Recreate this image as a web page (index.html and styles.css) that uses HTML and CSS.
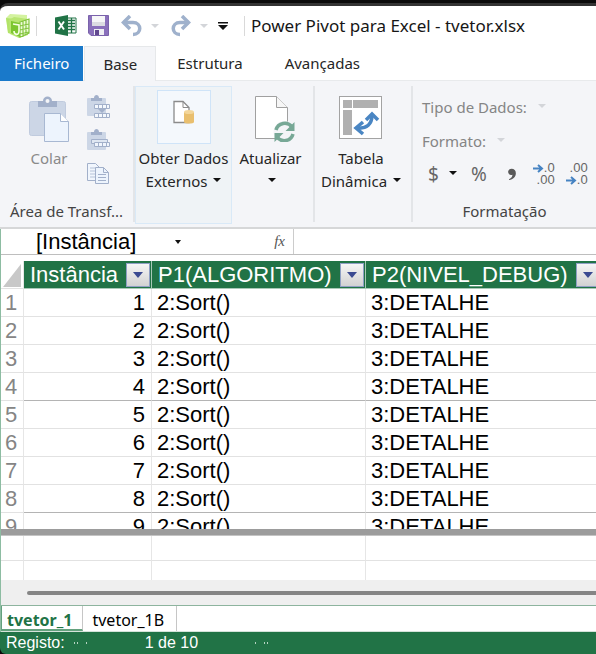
FILE: index.html
```html
<!DOCTYPE html>
<html lang="pt">
<head>
<meta charset="utf-8">
<title>Power Pivot para Excel - tvetor.xlsx</title>
<link rel="stylesheet" href="styles.css">
</head>
<body>
<div class="window">
  <header class="titlebar">
    <svg class="app-icon" width="24" height="24" viewBox="0 0 24 24" aria-hidden="true">
      <path d="M0 4 4 0l17 1v17l-5 3L2 19Z" fill="#d3f29f"/>
      <path d="M0 4l2 15 7 2V5Z" fill="#b2e368"/>
      <path d="M3 6 8 3l14 2v16l-9 3-9-4Z" fill="#b9e673"/>
      <path d="M5 7l9 2v14l-9-4Z" fill="#7cc62f"/>
      <path d="M14 8l9-3v14l-9 4Z" fill="#eefbd8"/>
      <path d="M14 12l9-2M14 16l9-2M14 20l9-2M14 8l9-3v14l-9 4ZM17 7v16M20 6v15" fill="none" stroke="#84c540" stroke-width="1.2"/>
      <path d="M7 10l6 1v6c0 5-5 4-5 0" fill="none" stroke="#f4ffe0" stroke-width="1.6"/>
    </svg>
    <span class="divider"></span>
    <button class="tool excel" aria-label="Mudar para o livro">
      <svg width="22" height="22" viewBox="0 0 22 22"><path d="M12 3h9v15h-9" fill="#fff" stroke="#207346"/><path d="M13 5.500h7M13 8.500h7M13 11.500h7M13 14.500h7M16.500 3v15" stroke="#207346" stroke-width="1.300"/><path d="M0 2.500 13 0v21L0 18.500Z" fill="#207346"/><path d="M3.500 6.500 9 14.500M9 6.500 3.500 14.500" stroke="#fff" stroke-width="1.900"/></svg>
    </button>
    <button class="tool save" aria-label="Guardar">
      <svg width="22" height="22" viewBox="0 0 22 22"><path d="M.5.5h20v20H3l-2.500-2.500Z" fill="#8a70bb" stroke="#7a62ab"/><path d="M4 1h13v10H4Z" fill="#f6f6f8"/><path d="M4 7h13v4H4Z" fill="#dcdce2"/><path d="M6 14h10v6H6Z" fill="#efeff4"/><path d="M7 15h4v5H7Z" fill="#62498f"/></svg>
    </button>
    <button class="tool undo" aria-label="Anular">
      <svg width="22" height="22" viewBox="0 0 22 22"><path d="M2 7.500h10c9 0 9 12 0 12" fill="none" stroke="#9fb1cc" stroke-width="3.500"/><path d="M9 1 2.500 7.500 9 14" fill="none" stroke="#9fb1cc" stroke-width="3.500"/></svg>
    </button>
    <button class="tool" aria-label="Opções de anular"><span class="caret pale"></span></button>
    <button class="tool redo" aria-label="Refazer">
      <svg width="22" height="22" viewBox="0 0 22 22"><path d="M19 7.500H10c-9 0-9 12 0 12" fill="none" stroke="#9fb1cc" stroke-width="3.500"/><path d="m12 1 6.500 6.500L12 14" fill="none" stroke="#9fb1cc" stroke-width="3.500"/></svg>
    </button>
    <button class="tool" aria-label="Opções de refazer"><span class="caret pale"></span></button>
    <button class="tool customize" aria-label="Personalizar barra">
      <svg width="10" height="8" viewBox="0 0 10 8"><path d="M0 0h10v1.500H0ZM0 3h10L5 8Z" fill="#111"/></svg>
    </button>
    <span class="divider last"></span>
    <h1>Power Pivot para Excel - tvetor.xlsx</h1>
  </header>

  <nav class="tabs">
    <button class="tab file">Ficheiro</button>
    <button class="tab active">Base</button>
    <button class="tab">Estrutura</button>
    <button class="tab">Avançadas</button>
  </nav>

  <section class="ribbon">
    <div class="group clipboard">
      <div class="controls">
        <button class="big paste" disabled>
          <span class="icon"><svg width="40" height="46" viewBox="0 0 40 46"><rect x=".5" y="5.500" width="36" height="34" rx="2" fill="#ccd6e6" stroke="#c0cbde"/><path d="M9 11V5h5c0-6 9-6 9 0h5v6Z" fill="#a2b0ca"/><circle cx="18.500" cy="5" r="2" fill="#f4f5f8"/><path d="M15.500 17.500h16l8 8v20h-24Z" fill="#edf4fd" stroke="#a8b8d2"/><path d="M31.500 17.500v8h8" fill="#fff" stroke="#a8b8d2"/></svg></span>
          <span class="label">Colar</span>
        </button>
        <div class="stack">
          <button aria-label="Colar e acrescentar" disabled><svg width="23" height="24" viewBox="0 0 23 24"><rect y="3" width="19" height="18" rx="1" fill="#ccd6e6"/><path d="M4 6V3h3c0-4 5-4 5 0h3v3Z" fill="#a2b0ca"/><path d="M7.500 9.500h15v4h-15ZM7.500 18.500h15v4h-15Z" fill="#f4f8fd" stroke="#a2b0ca"/><path d="M11.500 10v3M15.500 10v3M19.500 10v3M11.500 19v3M15.500 19v3M19.500 19v3" stroke="#a2b0ca"/><path d="M11 14h8l-4 4Z" fill="#a2b0ca"/></svg></button>
          <button aria-label="Colar e substituir" disabled><svg width="23" height="24" viewBox="0 0 23 24"><rect y="4" width="19" height="18" rx="1" fill="#ccd6e6"/><path d="M4 7V4h3c0-4 5-4 5 0h3v3Z" fill="#a2b0ca"/><path d="M4.500 11.500h16v4h-16Z" fill="#dfe7f2" stroke="#a2b0ca"/><path d="M7.500 14.500h15v4h-15Z" fill="#f0f5fc" stroke="#a2b0ca"/><path d="M11.500 15v3M15.500 15v3M19.500 15v3" stroke="#a2b0ca"/></svg></button>
          <button aria-label="Copiar" disabled><svg width="23" height="24" viewBox="0 0 23 24"><path d="M.5 2.500h8l4 4v13H.5Z" fill="#f1f6fd" stroke="#a2b0ca"/><path d="M3 7h6M3 10h6M3 13h6M3 16h6" stroke="#b6c3d8"/><path d="M8.500 6.500h8l5 5v11h-13Z" fill="#edf4fd" stroke="#a2b0ca"/><path d="M16.500 6.500v5h5M11 13.500h8M11 16.500h8M11 19.500h8" fill="none" stroke="#a2b0ca"/></svg></button>
        </div>
      </div>
      <p class="group-name">Área de Transf...</p>
    </div>

    <div class="group data">
      <button class="big hover">
        <span class="icon frame"><svg width="22" height="24" viewBox="0 0 22 24"><path d="M1 1.500h9l6 6v15H1Z" fill="#fff" stroke="#8b8b8b" stroke-width="1.300"/><path d="M10 1.500v6h6" fill="none" stroke="#8b8b8b"/><path d="M11 12v10c0 2 10 2 10 0V12Z" fill="#e9bf6e"/><ellipse cx="16" cy="12" rx="5" ry="2" fill="#f3d69a"/></svg></span>
        <span class="label">Obter Dados<br>Externos <span class="caret"></span></span>
      </button>
      <button class="big refresh">
        <span class="icon"><svg width="40" height="46" viewBox="0 0 40 46"><path d="M.5.500h21l11 11v31H.5Z" fill="#fff" stroke="#a0a0a0"/><path d="M21.500.500v11h11" fill="#f6f6f6" stroke="#a0a0a0"/><circle cx="29.500" cy="36" r="11" fill="#f4f5f8"/><path d="M21 34a9 9 0 0 1 16-3M38 38a9 9 0 0 1-16 3" fill="none" stroke="#77a896" stroke-width="3.500"/><path d="M39.500 26v9h-9ZM19.500 46v-9h9Z" fill="#77a896"/></svg></span>
        <span class="label">Atualizar<br><span class="caret"></span></span>
      </button>
    </div>

    <div class="group pivot">
      <button class="big">
        <span class="icon"><svg width="43" height="44" viewBox="0 0 43 44"><rect x=".5" y=".5" width="42" height="42" fill="#fff" stroke="#a3a3a3"/><path d="M4 4h9v8H4ZM14 4h25v8H14ZM4 14h9v25H4Z" fill="#b0b0b0"/><path d="M18 32c10 1 15-4 15-13" fill="none" stroke="#4a86c3" stroke-width="3.500"/><path d="m27 24 6-6 6 6M24 26l-7 6 7 6" fill="none" stroke="#4a86c3" stroke-width="3.500"/></svg></span>
        <span class="label">Tabela<br>Dinâmica <span class="caret"></span></span>
      </button>
    </div>

    <div class="group format">
      <div class="format-rows">
        <button class="drop" disabled>Tipo de Dados: <span class="caret pale"></span></button>
        <button class="drop" disabled>Formato: <span class="caret pale"></span></button>
        <div class="numbers">
          <button class="dollar">$</button>
          <button aria-label="Moedas"><span class="caret"></span></button>
          <button class="percent">%</button>
          <button class="comma" aria-label="Separador de milhares"><svg width="8" height="12" viewBox="0 0 9 14"><path d="M1 13c3-1 4-3 4-5C2 9 0 7 0 4.500 0 2 2 1 4 1c3 0 5 2 5 5 0 4-3 7-8 8Z" fill="#5a5a5a"/></svg></button>
          <button class="decimal" aria-label="Aumentar casas decimais"><span><svg width="11" height="9" viewBox="0 0 11 9"><path d="M0 4.500h9M5 1l4 3.500L5 8" fill="none" stroke="#4683c2" stroke-width="2"/></svg>.0</span><span>.00</span></button>
          <button class="decimal" aria-label="Diminuir casas decimais"><span>.00</span><span><svg width="11" height="9" viewBox="0 0 11 9"><path d="M0 4.500h9M5 1l4 3.500L5 8" fill="none" stroke="#4683c2" stroke-width="2"/></svg>.0</span></button>
        </div>
      </div>
      <p class="group-name">Formatação</p>
    </div>
  </section>

  <main class="sheet">
    <div class="formula-bar">
      <input class="name-box" aria-label="Caixa de nome" value="[Instância]">
      <button class="name-drop" aria-label="Escolher coluna"><span class="caret small"></span></button>
      <span class="fx">fx</span>
      <input class="formula" aria-label="Fórmula">
    </div>

    <div class="grid-pane">
      <table class="grid">
        <colgroup><col class="c-num"><col class="c-id"><col class="c-p1"><col class="c-p2"></colgroup>
        <thead>
          <tr>
            <td class="corner"><svg width="18" height="23" viewBox="0 0 18 23" aria-hidden="true"><path d="M18 0v23H0Z" fill="#c8c8c8"/></svg></td>
            <th><div class="head">Instância<button class="filter" aria-label="Filtrar Instância"></button></div></th>
            <th><div class="head">P1(ALGORITMO)<button class="filter" aria-label="Filtrar P1"></button></div></th>
            <th><div class="head">P2(NIVEL_DEBUG)<button class="filter" aria-label="Filtrar P2"></button></div></th>
          </tr>
        </thead>
        <tbody>
          <tr><th>1</th><td>1</td><td>2:Sort()</td><td>3:DETALHE</td></tr>
          <tr><th>2</th><td>2</td><td>2:Sort()</td><td>3:DETALHE</td></tr>
          <tr><th>3</th><td>3</td><td>2:Sort()</td><td>3:DETALHE</td></tr>
          <tr><th>4</th><td>4</td><td>2:Sort()</td><td>3:DETALHE</td></tr>
          <tr><th>5</th><td>5</td><td>2:Sort()</td><td>3:DETALHE</td></tr>
          <tr><th>6</th><td>6</td><td>2:Sort()</td><td>3:DETALHE</td></tr>
          <tr><th>7</th><td>7</td><td>2:Sort()</td><td>3:DETALHE</td></tr>
          <tr><th>8</th><td>8</td><td>2:Sort()</td><td>3:DETALHE</td></tr>
          <tr><th>9</th><td>9</td><td>2:Sort()</td><td>3:DETALHE</td></tr>
        </tbody>
      </table>
    </div>
    <div class="splitter"></div>
    <table class="grid measures">
      <colgroup><col class="c-num"><col class="c-id"><col class="c-p1"><col class="c-p2"></colgroup>
      <tbody>
        <tr><td></td><td></td><td></td><td></td></tr>
        <tr><td></td><td></td><td></td><td></td></tr>
      </tbody>
    </table>
    <div class="scroll"><div class="thumb"></div></div>
    <div class="sheet-tabs">
      <button class="sheet-tab current">tvetor_1</button>
      <button class="sheet-tab">tvetor_1B</button>
    </div>
  </main>

  <footer class="status">
    <span>Registo:</span>
    <svg width="14" height="4" viewBox="0 0 14 4" aria-hidden="true"><path d="M0 1h1v2H0ZM3 1h1v2H3ZM12 1h1v2h-1Z" fill="#b5d3c1"/></svg>
    <span class="record">1 de 10</span>
    <svg width="14" height="4" viewBox="0 0 14 4" aria-hidden="true"><path d="M0 1h1v2H0ZM9 1h1v2H9ZM12 1h1v2h-1Z" fill="#b5d3c1"/></svg>
  </footer>
</div>
</body>
</html>
```
FILE: styles.css
```css
* { box-sizing: border-box; }

body {
  margin: 0;
  background: #0a0a0a;
  color: #262626;
  font: 15px/23px "Noto Sans", "Open Sans", sans-serif;
}

button, input {
  margin: 0;
  padding: 0;
  border: 0;
  background: none;
  color: inherit;
  font: inherit;
}

h1, p { margin: 0; }
svg { display: block; flex: none; }

.window {
  display: flex;
  flex-direction: column;
  height: 100vh;
  padding-top: 3px;
  overflow: hidden;
}

.caret {
  display: inline-block;
  margin: 0 0 5px 2px;
  border: 4px solid transparent;
  border-top-color: #111;
  border-bottom: 0;
  vertical-align: middle;
}
.caret.pale { border-top-color: #d3d5d9; }
.caret.small { border-width: 4px 3px 0; }

/* Title bar */
.titlebar {
  display: flex;
  flex: none;
  align-items: center;
  height: 43px;
  padding: 0 6px;
  border-top: 3px solid #333;
  border-top-left-radius: 8px;
  background: #fff;
  white-space: nowrap;
}
.titlebar h1 { padding-bottom: 2px; color: #161616; font-size: 17px; font-weight: 400; }
.divider { width: 1px; height: 20px; margin: 0 18px 0 6px; background: #d9d9d9; }
.divider.last { margin: 0 6px 0 16px; }
.tool { flex: none; }
.save { margin-left: 11px; }
.undo, .redo { margin-left: 11px; }
.tool .caret { display: block; margin: 0 0 0 8px; }
.customize { margin-left: 10px; }

/* Ribbon tabs */
.tabs {
  display: flex;
  flex: none;
  height: 35px;
  background: #fff;
  box-shadow: inset 0 -1px #e8eaec;
}
.tab { padding: 0 20px; border: 1px solid transparent; }
.tab.file { margin-right: 1px; padding: 0 13px; background: #1979ca; color: #fff; }
.tab.active { padding: 0 18px; border-color: #e6e8ea; border-bottom: 0; background: #f4f5f8; }

/* Ribbon */
.ribbon {
  display: flex;
  flex: none;
  height: 148px;
  padding-top: 5px;
  border-bottom: 2px solid #d6d7d8;
  background: #f4f5f8;
}
.group {
  display: flex;
  flex: none;
  height: 136px;
  border-right: 2px solid #e3e5e8;
}
.clipboard, .format { flex-direction: column; justify-content: space-between; }
.clipboard { width: 135px; }
.data { width: 180px; }
.pivot { width: 98px; justify-content: center; padding-right: 4px; }
.format { flex: 1; border-right: 0; }
.group-name { height: 22px; color: #444; text-align: center; }

.controls { display: flex; }
.big {
  display: flex;
  flex-direction: column;
  gap: 3px;
  align-items: center;
  height: 138px;
  padding-top: 4px;
  border: 0;
  white-space: nowrap;
}
.big .icon {
  display: flex;
  align-items: flex-start;
  justify-content: center;
  height: 54px;
  padding-top: 6px;
}
.paste { width: 98px; height: 110px; color: #8a8a8a; }
.hover { flex: none; width: 97px; background: #eff3f6; box-shadow: inset 0 0 0 1px #d9e9f7; }
.big .frame { width: 54px; padding-top: 9px; border: 1px solid #cfe4f8; background: #f4f8fc; }
.refresh { flex: 1; padding-right: 4px; }
.refresh svg { margin-left: 8px; }

.stack {
  display: flex;
  flex-direction: column;
  gap: 9px;
  margin-left: -11px;
  padding-top: 9px;
}

.format-rows { padding: 10px 0 0 9px; }
.drop { display: block; height: 34px; padding-bottom: 11px; color: #858585; }
.drop .caret { margin-left: 7px; }
.numbers { display: flex; align-items: center; height: 20px; color: #666; }
.numbers .caret { margin-left: 0; }
.dollar, .percent { font-size: 19px; }
.dollar { margin: 0 10px 0 6px; }
.percent { margin: 0 21px 0 14px; }
.decimal {
  display: flex;
  flex-direction: column;
  align-items: flex-end;
  width: 22px;
  margin-left: 17px;
  font: 13px/12px "Liberation Sans", Arial, sans-serif;
}
.decimal + .decimal { margin-left: 11px; }
.decimal span { display: flex; align-items: center; }

/* Sheet */
.sheet {
  display: flex;
  flex: 1;
  flex-direction: column;
  min-height: 0;
  border-left: 1px solid #8dbca2;
  background: #fff;
  color: #000;
  overflow: hidden;
}
.formula-bar {
  display: flex;
  flex: none;
  align-items: center;
  height: 26px;
  border-bottom: 1px solid #bebebe;
}
.name-box, .grid { font: 22px/27px "Liberation Sans", Arial, sans-serif; }
.name-box { width: 140px; height: 25px; padding-left: 35px; }
.name-drop { display: flex; width: 68px; padding-left: 34px; }
.name-drop .caret { margin: 0; }
.fx {
  width: 85px;
  padding-right: 8px;
  border-right: 1px solid #ccc;
  color: #555;
  font: italic 15px/25px "Liberation Serif", "Times New Roman", serif;
  text-align: right;
}
.formula { flex: 1; min-width: 0; }

.grid-pane { flex: 1; min-height: 0; padding-top: 6px; overflow: hidden; }
.grid { width: 100%; table-layout: fixed; border-collapse: separate; border-spacing: 0; }
.c-num { width: 23px; }
.c-id { width: 128px; }
.c-p1 { width: 214px; }
.c-p2 { width: 235px; }
.grid th, .grid td {
  height: 28px;
  padding: 0 5px;
  border-right: 1px solid #e6e6e6;
  border-bottom: 1px solid #e2e2e2;
  font-weight: 400;
  text-align: left;
  white-space: nowrap;
}
.grid tr > :last-child { border-right: 0; }
.grid thead th { padding: 0 1px 0 6px; border-color: #a9c9b7; background: #217346; color: #fff; }
.head { display: flex; align-items: center; justify-content: space-between; }
.grid .corner { padding: 2px 2px 0; }
.filter {
  display: flex;
  flex: none;
  align-items: center;
  justify-content: center;
  width: 24px;
  height: 24px;
  border: 1px solid #8f9fc4;
  background: linear-gradient(#f5f5f5, #d2d2d2);
}
.filter::before {
  border: 5px solid transparent;
  border-top: 6px solid #3b4a91;
  border-bottom: 0;
  content: "";
}
.grid tbody th { padding: 0 4px; color: #858585; }
.grid tbody td:nth-child(2) { padding-right: 6px; text-align: right; }
.grid tbody tr:nth-child(4n) > :not(th) { border-bottom-color: #b4b4b4; }

.splitter { flex: none; height: 7px; border-bottom: 1px solid #c4c4c4; background: #9c9c9c; }
.grid.measures { flex: none; }
.measures td { height: 25px; }
.measures tr:last-child td { height: 19px; border-bottom: 0; }
.scroll { flex: none; padding: 11px 0 10px 26px; background: #efefef; }
.thumb { height: 4px; border-radius: 2px 0 0 2px; background: #858585; }
.sheet-tabs {
  display: flex;
  flex: none;
  height: 27px;
  border-top: 1px solid #8db49e;
  border-bottom: 1px solid #d5e3da;
  font-size: 16px;
  line-height: 25px;
}
.sheet-tab { padding: 2px 12px 0 9px; border-right: 1px solid #c6c6c6; }
.sheet-tab.current {
  padding: 2px 10px 0 5px;
  border-bottom: 2px solid #64a17e;
  border-left: 1px solid #64a17e;
  color: #217346;
  font-weight: 700;
}

.status {
  display: flex;
  flex: none;
  align-items: center;
  gap: 9px;
  height: 22px;
  padding: 0 6px;
  border-bottom-left-radius: 6px;
  background: #217346;
  color: #fff;
  font: 16px/22px "Liberation Sans", Arial, sans-serif;
}
.record { margin: 0 48px; }
```
